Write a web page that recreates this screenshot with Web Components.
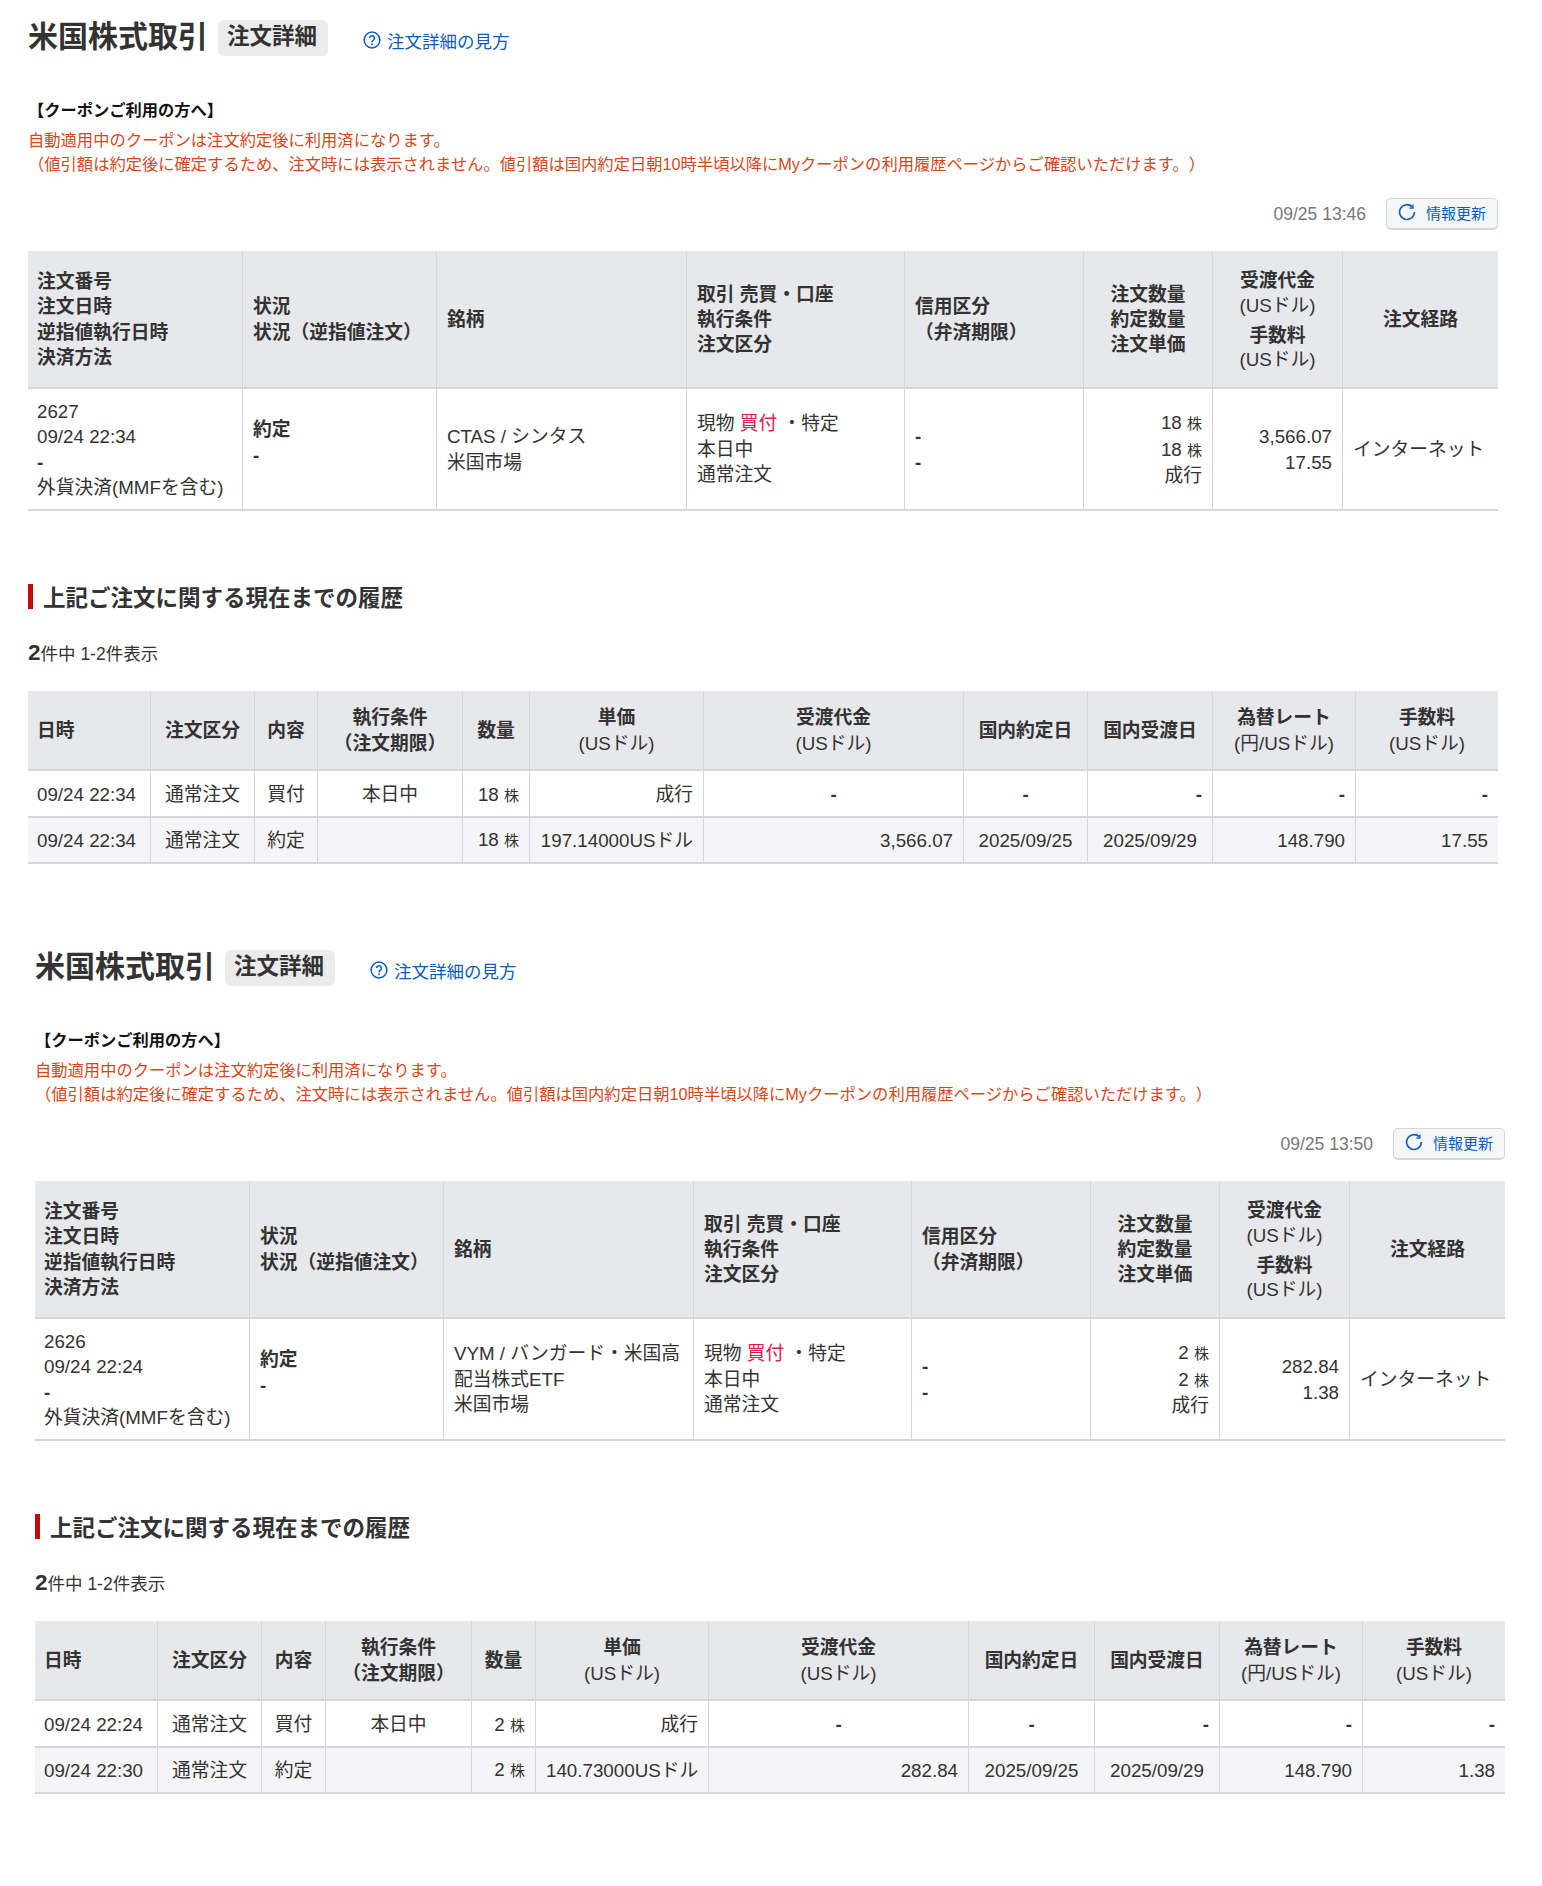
<!DOCTYPE html>
<html lang="ja">
<head>
<meta charset="utf-8">
<title>米国株式取引 注文詳細</title>
<style>
  html, body { margin: 0; padding: 0; background: #fff; }
  body { font-family: "Liberation Sans", "Noto Sans CJK JP", sans-serif; color: #333; text-spacing-trim: space-all; }
</style>
</head>
<body>
<order-page></order-page>
<order-page></order-page>

<template id="page-title-t">
  <style>
    :host { display: flex; align-items: center; height: 36px; }
    h1 { margin: -2px 0 0; font-size: 30px; line-height: 36px; font-weight: 700; color: #333; }
    .badge { margin-left: 10px; height: 36px; line-height: 33px; padding: 0 9px; box-sizing: border-box; width: 110px; white-space: nowrap; background: #ebebeb; border-radius: 6px; font-size: 22.5px; font-weight: 700; color: #333; }
    a { margin: 4px 0 0 35px; display: inline-flex; align-items: center; gap: 6px; font-size: 17.5px; color: #0b5cc0; text-decoration: none; }
    svg { display: block; flex: none; }
  </style>
  <h1><slot name="title"></slot></h1>
  <span class="badge"><slot name="badge"></slot></span>
  <a href="#"><svg width="18" height="18" viewBox="0 0 18 18" fill="none" stroke="#0b5cc0"><circle cx="9" cy="9" r="7.9" stroke-width="1.5"/><path d="M6.6 7.1a2.4 2.4 0 1 1 3.8 2c-.9.6-1.4 1-1.4 2.1" stroke-width="1.5"/><circle cx="9" cy="13.3" r=".95" fill="#0b5cc0" stroke="none"/></svg><slot name="link"></slot></a>
</template>

<template id="coupon-note-t">
  <style>
    :host { display: block; margin-top: 42px; }
    .h { font-size: 16.25px; line-height: 24px; font-weight: 700; color: #111; }
    .b { margin-top: 6px; font-size: 16.3px; line-height: 24px; color: #d4481c; white-space: nowrap; }
  </style>
  <div class="h"><slot name="heading"></slot></div>
  <div class="b"><slot></slot></div>
</template>

<template id="update-bar-t">
  <style>
    :host { display: flex; justify-content: flex-end; align-items: center; margin-top: 22px; height: 32px; }
    .time { font-size: 17.5px; color: #777; margin-right: 20px; }
    button { all: unset; box-sizing: border-box; width: 112px; height: 32px; display: flex; align-items: center; gap: 10px; padding: 0 0 2px 11px; background: #f5f6f8; border: 1px solid #d3d6da; border-bottom-width: 2px; border-radius: 5px; font-size: 15px; color: #0b5cc0; }
    svg { display: block; flex: none; margin-bottom: 2px; }
  </style>
  <span class="time"><slot name="time"></slot></span>
  <button><svg width="18" height="18" viewBox="0 0 18 18" fill="none" stroke="#0b5cc0" stroke-width="1.6"><path d="M14.3 3.9A7.4 7.4 0 1 0 16.4 9"/><path d="M11.3 5.2l3.6-.1.1-3.7" stroke-width="1.3" fill="none"/></svg><slot name="label"></slot></button>
</template>

<template id="section-heading-t">
  <style>
    :host { display: block; margin-top: 73px; height: 25px; border-left: 5px solid #c40a0a; padding-left: 10px; font-size: 22.5px; line-height: 29px; font-weight: 700; color: #333; white-space: nowrap; }
  </style>
  <slot></slot>
</template>

<template id="result-count-t">
  <style>
    :host { display: block; margin-top: 29px; height: 30px; line-height: 30px; font-size: 17.5px; color: #333; white-space: nowrap; }
    b { font-size: 22.5px; }
  </style>
  <b><slot name="total"></slot></b><slot></slot>
</template>

<template id="data-table-t">
  <style>
    :host { display: block; }
    table { border-collapse: separate; border-spacing: 0; table-layout: fixed; width: 1470px; font-size: 18.75px; line-height: 25.35px; color: #333; }
    th, td { box-sizing: border-box; padding: var(--pt, 2px) 10px 0; border-right: 1px solid #d5d7da; vertical-align: middle; text-align: left; font-weight: 400; white-space: nowrap; }
    th:first-child, td:first-child { padding-left: 9px; }
    th:last-child, td:last-child { border-right: 0; }
    th { background: #e7e8ec; border-bottom: 2px solid #d5d7da; }
    td { border-bottom: 2px solid #d5d7da; }
    tr.alt td { background: #f5f5f7; }
    .c { text-align: center; }
    .r { text-align: right; }
    .up { padding-bottom: 14px; }
    b { font-weight: 700; }
    .gap { display: block; height: 5px; }
    .pull { display: block; margin-top: -2px; }
    small { font-size: 15px; }
    .buy { color: #e0194f; }
  </style>
  <table><colgroup></colgroup><thead></thead><tbody></tbody></table>
</template>

<template id="order-page-t">
  <style>
    :host { display: block; box-sizing: border-box; height: 930px; width: 1542px; padding: 20px 0 0 var(--left, 28px); }
    .wrap { width: 1470px; }
    data-table.main { margin-top: 21px; }
    data-table.hist { margin-top: 23px; }
  </style>
  <div class="wrap"></div>
</template>

<script>
function tpl(id) { return document.getElementById(id).content.cloneNode(true); }
function simple(name, id) {
  customElements.define(name, class extends HTMLElement {
    constructor() { super(); this.attachShadow({ mode: "open" }).appendChild(tpl(id)); }
  });
}
simple("page-title", "page-title-t");
simple("coupon-note", "coupon-note-t");
simple("update-bar", "update-bar-t");
simple("section-heading", "section-heading-t");
simple("result-count", "result-count-t");

customElements.define("data-table", class extends HTMLElement {
  constructor() { super(); this.attachShadow({ mode: "open" }).appendChild(tpl("data-table-t")); }
  set config(cfg) {
    const s = this.shadowRoot;
    s.querySelector("colgroup").innerHTML = cfg.cols.map(w => `<col style="width:${w}px">`).join("");
    const row = (tag, cells) => cells.map(c => {
      const [html, cls] = Array.isArray(c) ? c : [c, ""];
      return `<${tag} class="${cls || ""}">${html}</${tag}>`;
    }).join("");
    s.querySelector("thead").innerHTML = `<tr style="height:${cfg.headH}px">${row("th", cfg.head)}</tr>`;
    s.querySelector("tbody").innerHTML = cfg.rows.map((r, i) =>
      `<tr class="${cfg.alt && i % 2 ? "alt" : ""}" style="height:${cfg.rowH[i]}px;--pt:${(cfg.rowPad || [])[i] ?? 2}px">${row("td", r)}</tr>`).join("");
  }
});

const KABU = ' <small>株</small>';
const D = "<b>-</b>";
const MAIN_HEAD = [
  "<b>注文番号<br>注文日時<br>逆指値執行日時<br>決済方法</b>",
  "<b>状況<br>状況（逆指値注文）</b>",
  "<b>銘柄</b>",
  "<b>取引 売買・口座<br>執行条件<br>注文区分</b>",
  "<b>信用区分<br>（弁済期限）</b>",
  ["<b>注文数量<br>約定数量<br>注文単価</b>", "c"],
  ['<b>受渡代金</b><br>(USドル)<span class="gap"></span><b>手数料</b><span class="pull">(USドル)</span>', "c"],
  ["<b>注文経路</b>", "c"]
];
const HIST_HEAD = [
  "<b>日時</b>",
  ["<b>注文区分</b>", "c"],
  ["<b>内容</b>", "c"],
  ["<b>執行条件</b><br><b>（注文期限）</b>", "c"],
  ["<b>数量</b>", "c"],
  ["<b>単価</b><br>(USドル)", "c"],
  ["<b>受渡代金</b><br>(USドル)", "c"],
  ["<b>国内約定日</b>", "c"],
  ["<b>国内受渡日</b>", "c"],
  ["<b>為替レート</b><br>(円/USドル)", "c"],
  ["<b>手数料</b><br>(USドル)", "c"]
];
function histRows(d) {
  return [
    [d.t1, ["通常注文", "c"], ["買付", "c"], ["本日中", "c"], [d.q + KABU, "r"], ["成行", "r"], [D, "c"], [D, "c"], [D, "r"], [D, "r"], [D, "r"]],
    [d.t2, ["通常注文", "c"], ["約定", "c"], "", [d.q + KABU, "r"], [d.price, "r"], [d.amt, "r"], ["2025/09/25", "c"], ["2025/09/29", "c"], ["148.790", "r"], [d.fee, "r"]]
  ];
}
const PAGES = [
  { left: 28, time: "09/25 13:46", no: "2627", dt: "09/24 22:34", name: "CTAS / シンタス<br>米国市場",
    q: "18", amt: "3,566.07", fee: "17.55", t1: "09/24 22:34", t2: "09/24 22:34", price: "197.14000USドル",
    hist: [123,104,63,145,67,174,260,124,125,143,142] },
  { left: 35, time: "09/25 13:50", no: "2626", dt: "09/24 22:24", name: "VYM / バンガード・米国高<br>配当株式ETF<br>米国市場",
    q: "2", amt: "282.84", fee: "1.38", t1: "09/24 22:24", t2: "09/24 22:30", price: "140.73000USドル",
    hist: [123,104,64,146,64,173,260,126,125,143,142] }
];
let pageIdx = 0;
customElements.define("order-page", class extends HTMLElement {
  constructor() {
    super();
    const s = this.attachShadow({ mode: "open" });
    s.appendChild(tpl("order-page-t"));
    const d = PAGES[pageIdx++];
    this.style.setProperty("--left", d.left + "px");
    const w = s.querySelector(".wrap");
    w.innerHTML = `
      <page-title><span slot="title">米国株式取引</span><span slot="badge">注文詳細</span><span slot="link">注文詳細の見方</span></page-title>
      <coupon-note><span slot="heading">【クーポンご利用の方へ】</span>自動適用中のクーポンは注文約定後に利用済になります。<br>（値引額は約定後に確定するため、注文時には表示されません。値引額は国内約定日朝10時半頃以降にMyクーポンの利用履歴ページからご確認いただけます。）</coupon-note>
      <update-bar><span slot="time">${d.time}</span><span slot="label">情報更新</span></update-bar>
      <data-table class="main"></data-table>
      <section-heading>上記ご注文に関する現在までの履歴</section-heading>
      <result-count><span slot="total">2</span>件中 1-2件表示</result-count>
      <data-table class="hist"></data-table>`;
    w.querySelector(".main").config = {
      cols: [215,194,250,218,179,129,130,155], headH: 137.5, rowH: [122], head: MAIN_HEAD,
      rows: [[
        `${d.no}<br>${d.dt}<br>${D}<br>外貨決済(MMFを含む)`,
        ["<b>約定</b><br><b>-</b>", "up"],
        d.name,
        '現物 <span class="buy">買付</span> ・特定<br>本日中<br>通常注文',
        `${D}<br>${D}`,
        [`${d.q}${KABU}<br>${d.q}${KABU}<br>成行`, "r"],
        [`${d.amt}<br>${d.fee}`, "r"],
        "インターネット"
      ]]
    };
    w.querySelector(".hist").config = {
      cols: d.hist, headH: 80, rowH: [47, 46], rowPad: [4, 2], head: HIST_HEAD, rows: histRows(d), alt: true
    };
  }
});
</script>
</body>
</html>
